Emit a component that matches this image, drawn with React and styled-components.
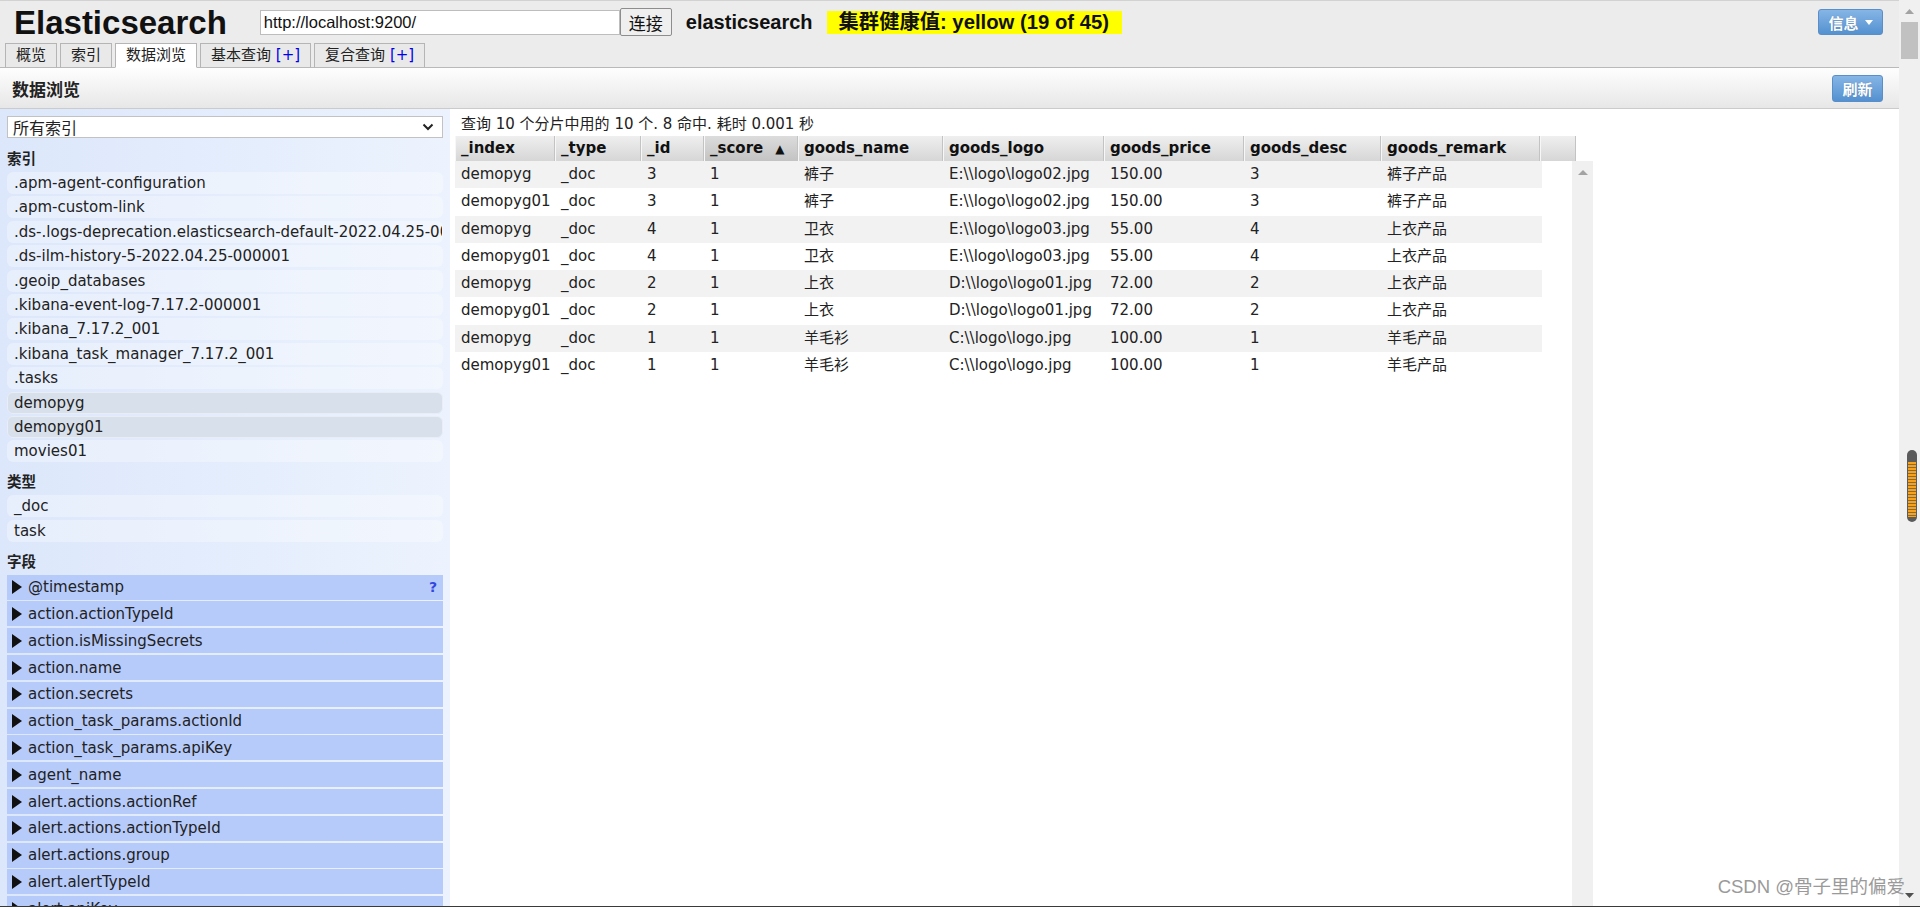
import React from 'react';
import styled, { createGlobalStyle } from 'styled-components';

const GlobalStyle = createGlobalStyle`
  html, body {
    margin: 0;
    padding: 0;
    height: 100%;
    overflow: hidden;
  }
  body {
    font-family: "DejaVu Sans", Verdana, "Noto Sans CJK SC", sans-serif;
    font-size: 15px;
    color: #222;
    background: #fff;
  }
  #root {
    height: 100%;
  }
`;

const Page = styled.div`
  position: relative;
  display: flex;
  height: 100vh;
  box-sizing: border-box;
  border-bottom: 1px solid #3a3a3a;
  overflow: hidden;
`;

const Main = styled.div`
  flex: 1;
  min-width: 0;
  display: flex;
  flex-direction: column;
`;

const Header = styled.header`
  background: #ececec;
  border-top: 1px solid #d2d2d2;
  border-bottom: 1px solid #b9b9b9;
`;

const TopRow = styled.div`
  display: flex;
  align-items: center;
  height: 42px;
  padding: 0 16px 0 14px;
`;

const Logo = styled.h1`
  margin: 0 33px 0 0;
  font-family: "Liberation Sans", Arial, sans-serif;
  font-size: 33px;
  font-weight: bold;
  color: #111;
  line-height: 1;
`;

const UrlInput = styled.input`
  width: 360px;
  height: 25px;
  box-sizing: border-box;
  border: 1px solid #bdbdbd;
  padding: 0 3px;
  font-family: "Liberation Sans", Arial, sans-serif;
  font-size: 16.5px;
  color: #111;
  background: #fff;
  outline: none;
`;

const ConnectButton = styled.button`
  width: 52px;
  height: 28px;
  box-sizing: border-box;
  border: 1px solid #8d8d8d;
  border-radius: 2px;
  background: #efefef;
  font-family: "Noto Sans CJK SC", sans-serif;
  font-size: 17px;
  color: #111;
  padding: 0;
`;

const ClusterName = styled.span`
  margin-left: 14px;
  font-family: "Liberation Sans", Arial, sans-serif;
  font-size: 20px;
  font-weight: bold;
  color: #111;
`;

const Health = styled.span`
  margin-left: 14px;
  height: 23px;
  line-height: 23px;
  padding: 0 13px 0 12px;
  background: #ffff00;
  font-family: "Liberation Sans", Arial, "Noto Sans CJK SC", sans-serif;
  font-size: 20.3px;
  font-weight: bold;
  color: #111;
`;

const Spacer = styled.div`
  flex: 1;
`;

const BlueButton = styled.button`
  display: flex;
  align-items: center;
  justify-content: center;
  gap: 6px;
  width: ${(p) => p.$w}px;
  height: ${(p) => p.$h}px;
  box-sizing: border-box;
  padding: 0;
  border: 1px solid #5a8ec8;
  border-radius: 3px;
  background: linear-gradient(#86b5e6, #5491d0);
  color: #fff;
  font-family: "Noto Sans CJK SC", sans-serif;
  font-size: 15px;
  font-weight: bold;
  text-shadow: 0 0 1px rgba(0, 0, 0, 0.25);
`;

const Tabs = styled.nav`
  display: flex;
  align-items: flex-end;
  gap: 3px;
  height: 24px;
  padding-left: 5px;
`;

const Tab = styled.div`
  height: 25px;
  margin-bottom: -1px;
  box-sizing: border-box;
  padding: 0 10px;
  border: 1px solid #b5b5b5;
  border-bottom-color: ${(p) => (p.$active ? '#fff' : '#b9b9b9')};
  background: ${(p) => (p.$active ? '#fff' : '#e9e9e9')};
  line-height: 23px;
  font-size: 15px;
  color: #222;
  white-space: pre;
`;

const Plus = styled.span`
  color: #0000ee;
`;

const SectionBar = styled.div`
  display: flex;
  align-items: center;
  height: 40px;
  padding: 0 16px 0 12px;
  background: linear-gradient(#fefefe, #e7e7e7);
  border-bottom: 1px solid #cbcbcb;
`;

const SectionTitle = styled.h2`
  margin: 0;
  font-family: "Noto Sans CJK SC", sans-serif;
  font-size: 17px;
  font-weight: bold;
  color: #222;
`;

const Body = styled.div`
  flex: 1;
  min-height: 0;
  display: flex;
`;

const Sidebar = styled.aside`
  width: 450px;
  flex: none;
  box-sizing: border-box;
  padding: 7px 7px 0;
  background: linear-gradient(to right, #dce7fb, #ecf3fe);
  overflow: hidden;
`;

const Select = styled.div`
  display: flex;
  align-items: center;
  justify-content: space-between;
  height: 22px;
  box-sizing: border-box;
  margin-bottom: 1px;
  padding: 0 8px 0 5px;
  border: 1px solid #c2c2c2;
  background: #fff;
  font-family: "Noto Sans CJK SC", sans-serif;
  font-size: 16px;
  color: #222;
`;

const GroupTitle = styled.div`
  padding: 9px 0 4px;
  line-height: 20px;
  font-family: "Noto Sans CJK SC", sans-serif;
  font-size: 14.5px;
  font-weight: bold;
  color: #222;
`;

const ItemList = styled.div`
  display: flex;
  flex-direction: column;
  gap: ${(p) => p.$gap}px;
`;

const Item = styled.div`
  height: 22px;
  box-sizing: border-box;
  padding: 0 6px;
  border-radius: 6px;
  white-space: nowrap;
  overflow: hidden;
  font-size: 15px;
  line-height: 20px;
  color: #222;
  background: ${(p) => (p.$selected ? '#d8e0ec' : 'rgba(255, 255, 255, 0.32)')};
  border: 1px solid ${(p) => (p.$selected ? '#e9eef6' : 'transparent')};
`;

const FieldRow = styled.div`
  display: flex;
  align-items: center;
  height: 25px;
  padding: 0 6px 0 5px;
  background: #b7cbfa;
  font-size: 15px;
  color: #222;
  white-space: nowrap;
`;

const Help = styled.span`
  margin-left: auto;
  color: #3346e0;
  font-weight: bold;
  font-size: 14px;
`;

const Results = styled.section`
  flex: 1;
  min-width: 0;
  display: flex;
  flex-direction: column;
  padding-left: 5px;
`;

const Summary = styled.div`
  height: 27px;
  box-sizing: border-box;
  padding: 4px 0 0 6px;
  line-height: 22px;
  font-size: 15px;
  color: #222;
  white-space: nowrap;
`;

const Grid = styled.div`
  width: 1138px;
  flex: 1;
  min-height: 0;
  display: flex;
  flex-direction: column;
`;

const HeadRow = styled.div`
  display: flex;
  height: 25px;
`;

const HeadCell = styled.div`
  width: ${(p) => p.$w}px;
  flex: none;
  box-sizing: border-box;
  padding-left: 5px;
  border-left: 1px solid #f7f7f7;
  border-right: 1px solid #c3c3c3;
  background: ${(p) =>
    p.$sorted
      ? 'linear-gradient(#dcdcdc, #c3c3c3)'
      : 'linear-gradient(#efefef, #d6d6d6)'};
  font-weight: bold;
  font-size: 15px;
  line-height: 25px;
  color: #111;
  white-space: nowrap;
`;

const SortMark = styled.span`
  margin-left: 12px;
  font-size: 12px;
`;

const BodyArea = styled.div`
  flex: 1;
  min-height: 0;
  display: flex;
`;

const Rows = styled.div`
  width: 1087px;
`;

const Row = styled.div`
  display: flex;
  height: 27.25px;
  background: ${(p) => (p.$odd ? '#f2f2f2' : '#fff')};
`;

const Cell = styled.div`
  width: ${(p) => p.$w}px;
  flex: none;
  box-sizing: border-box;
  padding-left: 6px;
  line-height: 27px;
  font-size: 15px;
  color: #222;
  white-space: nowrap;
`;

const Track = styled.div`
  margin-left: auto;
  width: 21px;
  display: flex;
  justify-content: center;
  padding-top: 9px;
  box-sizing: border-box;
  background: #f0f0f0;
`;

const PageScroll = styled.div`
  position: relative;
  width: 21px;
  flex: none;
  display: flex;
  flex-direction: column;
  align-items: center;
  background: #f0f0f0;
`;

const ArrowSlot = styled.div`
  height: 22px;
  display: flex;
  align-items: center;
  justify-content: center;
`;

const Thumb = styled.div`
  width: 17px;
  height: 37px;
  background: #c1c1c1;
`;

const Grip = styled.div`
  position: absolute;
  left: 8px;
  top: 450px;
  width: 10px;
  height: 72px;
  box-sizing: border-box;
  padding: 12px 1px 5px;
  border-radius: 5px;
  background: #5b5b5b;
  &::after {
    content: '';
    display: block;
    height: 100%;
    background: repeating-linear-gradient(
      #f6a21c 0,
      #f6a21c 2px,
      #8a6a3a 2px,
      #8a6a3a 3px
    );
  }
`;

const Watermark = styled.div`
  position: absolute;
  right: 15px;
  bottom: 8px;
  font-family: "Liberation Sans", Arial, "Noto Sans CJK SC", sans-serif;
  font-size: 18.5px;
  color: #9a9a9a;
  white-space: nowrap;
`;

const Triangle = ({ dir = 'up', color = '#a3a3a3', w = 9, h = 5 }) => (
  <svg width={w} height={h} viewBox={`0 0 ${w} ${h}`}>
    {dir === 'up' ? (
      <polygon points={`0,${h} ${w / 2},0 ${w},${h}`} fill={color} />
    ) : (
      <polygon points={`0,0 ${w},0 ${w / 2},${h}`} fill={color} />
    )}
  </svg>
);

const PlayIcon = () => (
  <svg width="10" height="14" viewBox="0 0 10 14" style={{ marginRight: 6, flex: 'none' }}>
    <polygon points="0,0 10,7 0,14" fill="#111" />
  </svg>
);

const Chevron = () => (
  <svg width="12" height="8" viewBox="0 0 12 8">
    <path d="M1.5 1.5 L6 6 L10.5 1.5" fill="none" stroke="#222" strokeWidth="2" />
  </svg>
);

const indices = [
  '.apm-agent-configuration',
  '.apm-custom-link',
  '.ds-.logs-deprecation.elasticsearch-default-2022.04.25-000001',
  '.ds-ilm-history-5-2022.04.25-000001',
  '.geoip_databases',
  '.kibana-event-log-7.17.2-000001',
  '.kibana_7.17.2_001',
  '.kibana_task_manager_7.17.2_001',
  '.tasks',
  'demopyg',
  'demopyg01',
  'movies01',
];
const selectedIndices = ['demopyg', 'demopyg01'];

const types = ['_doc', 'task'];

const fields = [
  '@timestamp',
  'action.actionTypeId',
  'action.isMissingSecrets',
  'action.name',
  'action.secrets',
  'action_task_params.actionId',
  'action_task_params.apiKey',
  'agent_name',
  'alert.actions.actionRef',
  'alert.actions.actionTypeId',
  'alert.actions.group',
  'alert.alertTypeId',
  'alert.apiKey',
  'alert.consumer',
];

const columns = [
  { key: '_index', w: 100 },
  { key: '_type', w: 86 },
  { key: '_id', w: 63 },
  { key: '_score', w: 94, sorted: true },
  { key: 'goods_name', w: 145 },
  { key: 'goods_logo', w: 161 },
  { key: 'goods_price', w: 140 },
  { key: 'goods_desc', w: 137 },
  { key: 'goods_remark', w: 159 },
];

const hits = [
  ['demopyg', '_doc', '3', '1', '裤子', 'E:\\\\logo\\logo02.jpg', '150.00', '3', '裤子产品'],
  ['demopyg01', '_doc', '3', '1', '裤子', 'E:\\\\logo\\logo02.jpg', '150.00', '3', '裤子产品'],
  ['demopyg', '_doc', '4', '1', '卫衣', 'E:\\\\logo\\logo03.jpg', '55.00', '4', '上衣产品'],
  ['demopyg01', '_doc', '4', '1', '卫衣', 'E:\\\\logo\\logo03.jpg', '55.00', '4', '上衣产品'],
  ['demopyg', '_doc', '2', '1', '上衣', 'D:\\\\logo\\logo01.jpg', '72.00', '2', '上衣产品'],
  ['demopyg01', '_doc', '2', '1', '上衣', 'D:\\\\logo\\logo01.jpg', '72.00', '2', '上衣产品'],
  ['demopyg', '_doc', '1', '1', '羊毛衫', 'C:\\\\logo\\logo.jpg', '100.00', '1', '羊毛产品'],
  ['demopyg01', '_doc', '1', '1', '羊毛衫', 'C:\\\\logo\\logo.jpg', '100.00', '1', '羊毛产品'],
];

export default function App() {
  return (
    <>
      <GlobalStyle />
      <Page>
        <Main>
          <Header>
            <TopRow>
              <Logo>Elasticsearch</Logo>
              <UrlInput defaultValue="http://localhost:9200/" readOnly />
              <ConnectButton>连接</ConnectButton>
              <ClusterName>elasticsearch</ClusterName>
              <Health>集群健康值: yellow (19 of 45)</Health>
              <Spacer />
              <BlueButton $w={65} $h={26}>
                信息
                <Triangle dir="down" color="#fff" w={8} h={5} />
              </BlueButton>
            </TopRow>
            <Tabs>
              <Tab>概览</Tab>
              <Tab>索引</Tab>
              <Tab $active>数据浏览</Tab>
              <Tab>
                基本查询 <Plus>[+]</Plus>
              </Tab>
              <Tab>
                复合查询 <Plus>[+]</Plus>
              </Tab>
            </Tabs>
          </Header>

          <SectionBar>
            <SectionTitle>数据浏览</SectionTitle>
            <Spacer />
            <BlueButton $w={51} $h={27}>刷新</BlueButton>
          </SectionBar>

          <Body>
            <Sidebar>
              <Select>
                所有索引
                <Chevron />
              </Select>

              <GroupTitle>索引</GroupTitle>
              <ItemList $gap={2.4}>
                {indices.map((name) => (
                  <Item key={name} $selected={selectedIndices.includes(name)}>
                    {name}
                  </Item>
                ))}
              </ItemList>

              <GroupTitle>类型</GroupTitle>
              <ItemList $gap={2.4}>
                {types.map((t) => (
                  <Item key={t}>{t}</Item>
                ))}
              </ItemList>

              <GroupTitle>字段</GroupTitle>
              <ItemList $gap={1.8}>
                {fields.map((f, i) => (
                  <FieldRow key={f}>
                    <PlayIcon />
                    {f}
                    {i === 0 && <Help>?</Help>}
                  </FieldRow>
                ))}
              </ItemList>
            </Sidebar>

            <Results>
              <Summary>查询 10 个分片中用的 10 个. 8 命中. 耗时 0.001 秒</Summary>
              <Grid>
                <HeadRow>
                  {columns.map((c) => (
                    <HeadCell key={c.key} $w={c.w} $sorted={c.sorted}>
                      {c.key}
                      {c.sorted && <SortMark>▲</SortMark>}
                    </HeadCell>
                  ))}
                  <HeadCell $w={36} />
                </HeadRow>
                <BodyArea>
                  <Rows>
                    {hits.map((hit, r) => (
                      <Row key={r} $odd={r % 2 === 0}>
                        {hit.map((v, c) => (
                          <Cell key={c} $w={columns[c].w}>
                            {v}
                          </Cell>
                        ))}
                      </Row>
                    ))}
                  </Rows>
                  <Track>
                    <Triangle dir="up" w={10} h={5} />
                  </Track>
                </BodyArea>
              </Grid>
            </Results>
          </Body>
        </Main>

        <PageScroll>
          <ArrowSlot>
            <Triangle dir="up" w={9} h={5} />
          </ArrowSlot>
          <Thumb />
          <Spacer />
          <ArrowSlot>
            <Triangle dir="down" color="#505050" w={9} h={5} />
          </ArrowSlot>
          <Grip />
        </PageScroll>

        <Watermark>CSDN @骨子里的偏爱</Watermark>
      </Page>
    </>
  );
}
